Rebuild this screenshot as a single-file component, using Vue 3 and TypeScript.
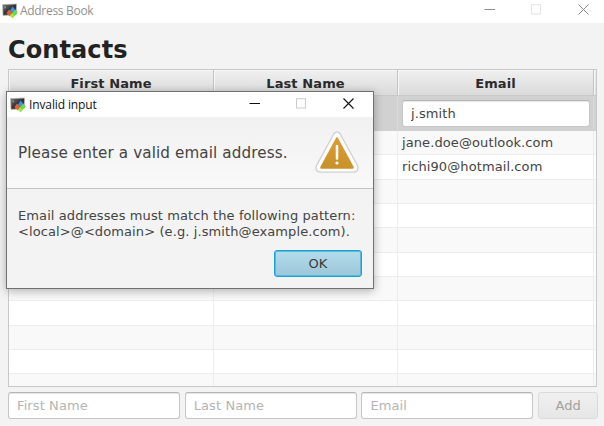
<script setup lang="ts">
import { ref } from 'vue'

interface Contact {
  firstName: string
  lastName: string
  email: string
}

const editedEmail = ref<string>('j.smith')
const contacts = ref<Contact[]>([
  { firstName: '', lastName: '', email: 'jane.doe@outlook.com' },
  { firstName: '', lastName: '', email: 'richi90@hotmail.com' },
])
const emptyRows = 9
const columns: string[] = ['First Name', 'Last Name', 'Email']
const dialogOpen = ref<boolean>(true)
</script>

<template>
  <div class="window">
    <svg class="defs" width="0" height="0" aria-hidden="true">
      <defs>
        <linearGradient id="screen" x1="0" y1="0" x2="1" y2="1">
          <stop offset="0" stop-color="#777" />
          <stop offset="0.5" stop-color="#333" />
          <stop offset="1" stop-color="#222" />
        </linearGradient>
        <linearGradient id="amber" x1="0" y1="0" x2="0" y2="1">
          <stop offset="0" stop-color="#e09a35" />
          <stop offset="1" stop-color="#c8922a" />
        </linearGradient>
        <symbol id="app-icon" viewBox="0 0 16 16">
          <path d="M0.6 1.6 14.6 1 14.2 11.4 1 12.4Z" fill="url(#screen)" stroke="#b8b8b8" stroke-width="0.7" />
          <path d="M2.2 3.5 4 4.4 2.3 5.3" fill="none" stroke="#bbb" stroke-width="0.6" />
          <path d="M10.6 3.4 13.4 6.8 10.4 10 8 7.4Z" fill="#3d8fe8" />
          <path d="M7 6.4 10.4 10 7.8 13.4 4.4 10Z" fill="#ef5b35" />
          <path d="M13.2 6.5 15.6 9.4 10.8 15 8 12.5 10.4 9.6Z" fill="#68df3f" />
          <path d="M10.2 10.4 12.5 12.7 10.6 15.2 7.8 12.8Z" fill="#a5e34a" />
        </symbol>
      </defs>
    </svg>

    <header class="titlebar">
      <svg class="app-icon" width="16" height="16"><use href="#app-icon" /></svg>
      <span class="title">Address Book</span>
      <svg class="controls" width="106" height="12" viewBox="0 0 106 12" fill="none">
        <path d="M0.5 5.5H11" stroke="#8d8d8d" />
        <rect x="47.5" y="0.7" width="9" height="9.3" stroke="#e4e4e4" />
        <path d="M94.5 0.5 104.5 10.5M104.5 0.5 94.5 10.5" stroke="#858585" />
      </svg>
    </header>

    <main class="content">
      <h1>Contacts</h1>
      <section class="table">
        <div class="row head">
          <div v-for="name in columns" :key="name" class="cell">{{ name }}</div>
          <div class="cell"></div>
        </div>
        <div class="row selected">
          <div class="cell"></div>
          <div class="cell"></div>
          <div class="cell"><input v-model="editedEmail" class="field" type="text" /></div>
          <div class="cell"></div>
        </div>
        <div v-for="contact in contacts" :key="contact.email" class="row">
          <div class="cell">{{ contact.firstName }}</div>
          <div class="cell">{{ contact.lastName }}</div>
          <div class="cell">{{ contact.email }}</div>
          <div class="cell"></div>
        </div>
        <div v-for="n in emptyRows" :key="n" class="row">
          <div v-for="c in 4" :key="c" class="cell"></div>
        </div>
      </section>

      <form class="add-form" @submit.prevent>
        <input v-for="name in columns" :key="name" class="field" type="text" :placeholder="name" />
        <button class="add" disabled>Add</button>
      </form>
    </main>

    <section v-if="dialogOpen" class="dialog" role="alertdialog">
      <header class="dialog-title">
        <svg class="app-icon" width="16" height="16"><use href="#app-icon" /></svg>
        <span class="title">Invalid input</span>
        <svg class="controls" width="106" height="12" viewBox="0 0 106 12" fill="none">
          <path d="M0.5 5.5H11" stroke="#111" />
          <rect x="47.5" y="0.7" width="9" height="9.3" stroke="#ccc" />
          <path d="M94.5 0.5 104.5 10.5M104.5 0.5 94.5 10.5" stroke="#111" stroke-width="1.1" />
        </svg>
      </header>
      <div class="dialog-header">
        <span class="message">Please enter a valid email address.</span>
        <svg class="warning" width="46" height="43" viewBox="0 0 46 43">
          <path d="M19.8 3Q23 -1.2 26.2 3L43.5 34.5Q45.6 40.8 39.5 41.2H6.5Q0.4 40.8 2.5 34.5Z" fill="#fff" stroke="#cfcfcf" stroke-width="1.3" />
          <path d="M22 7Q23 5.2 24 7L39.6 35.7Q40.4 37.6 38.6 37.8H7.4Q5.6 37.6 6.4 35.7Z" fill="url(#amber)" />
          <path d="M23 15V27.4" stroke="#fff" stroke-width="2.5" stroke-linecap="round" />
          <circle cx="23" cy="32" r="1.6" fill="#fff" />
        </svg>
      </div>
      <div class="dialog-body">
        <p>Email addresses must match the following pattern:<br />&lt;local&gt;@&lt;domain&gt; (e.g. j.smith@example.com).</p>
        <button class="ok" @click="dialogOpen = false">OK</button>
      </div>
    </section>
  </div>
</template>

<style>
body {
  margin: 0;
  overflow: hidden;
}
</style>

<style scoped>
* {
  box-sizing: border-box;
}
.window {
  position: relative;
  width: 604px;
  height: 426px;
  overflow: hidden;
  background: #f3f3f3;
  font: 13px/16px "DejaVu Sans", sans-serif;
  letter-spacing: 0.1px;
  color: #444;
}
.defs {
  position: absolute;
}
.titlebar,
.dialog-title {
  display: flex;
  align-items: center;
  background: #fff;
  font: 12px/16px "Open Sans", "Noto Sans", sans-serif;
}
.titlebar {
  height: 23px;
  padding: 0 14px 2px 2px;
  color: #909090;
  letter-spacing: -0.3px;
}
.titlebar .controls {
  margin-top: -1px;
}
.title {
  flex: 1;
  margin-left: 2px;
  white-space: nowrap;
}
.content {
  padding: 13px 7px 0 8px;
}
h1 {
  margin: 0 0 5px;
  font-size: 24px;
  line-height: 28px;
  font-weight: bold;
  color: #222;
}
.table {
  width: 589px;
  height: 318px;
  border: 1px solid #c8c8c8;
  background: #fff;
  overflow: hidden;
}
.row {
  display: grid;
  grid-template-columns: 205px 184px 196px 1fr;
  height: 24.33px;
  border-bottom: 1px solid #ededed;
  background: #fff;
}
.row:nth-child(odd) {
  background: #f9f9f9;
}
.cell {
  display: flex;
  align-items: center;
  padding-left: 4px;
  border-right: 1px solid #ededed;
  white-space: nowrap;
}
.cell:last-child {
  border-right: 0;
  padding: 0;
}
.row.head {
  height: 26px;
  background: linear-gradient(#f0f0f0, #dadada);
  border-bottom-color: #c8c8c8;
  font-weight: bold;
  color: #2b2b2b;
}
.head .cell {
  justify-content: center;
  padding: 3px 0 0;
  border-color: #c4c4c4;
  box-shadow: inset 1px 1px #f6f6f6;
}
.row.selected {
  height: 35px;
  background: #d1d1d1;
  border-bottom-color: #d1d1d1;
}
.selected .cell {
  border-color: #dadada;
}
.field {
  min-width: 0;
  height: 27px;
  padding: 1px 8px 0;
  border: 1px solid #c6c6c6;
  border-top-color: #b5b5b5;
  border-radius: 3px;
  background: #fff;
  box-shadow: inset 0 1px 1px #e6e6e6;
  font: inherit;
  letter-spacing: inherit;
  color: #444;
  outline: 0;
}
.field::placeholder {
  color: #b4b4b4;
  opacity: 1;
}
.selected .field {
  width: 188px;
}
.add-form {
  display: grid;
  grid-template-columns: 172px 172px 172px 60px;
  gap: 4.7px;
  margin-top: 5px;
}
.add-form .field {
  padding-top: 0;
}
button {
  padding: 0;
  border-radius: 3px;
  font: inherit;
}
.add {
  height: 27px;
  border: 1px solid #dadada;
  background: linear-gradient(#f0f0f0, #e6e6e6);
  color: #a0a0a0;
}
.dialog {
  position: absolute;
  left: 6px;
  top: 91px;
  width: 368px;
  height: 198px;
  border: 1px solid #707070;
  background: #f3f3f3;
  box-shadow: 0 2px 9px rgba(0, 0, 0, 0.3);
}
.dialog-title {
  height: 25px;
  padding: 0 18px 0 3px;
  color: #111;
  letter-spacing: -0.12px;
}
.dialog-title .title {
  margin-left: 3px;
}
.dialog-title .controls {
  margin-top: -1px;
}
.dialog-header {
  display: flex;
  align-items: center;
  justify-content: space-between;
  height: 72px;
  padding: 0 13px 0 11px;
  border-bottom: 1px solid #c4c4c4;
  background: linear-gradient(#f1f1f1, #f9f9f9);
}
.message {
  padding-top: 1px;
  font-size: 15.17px;
  letter-spacing: 0.12px;
  white-space: nowrap;
}
.dialog-body {
  display: flex;
  flex-direction: column;
  padding: 19px 11px 0;
}
p {
  margin: 0;
  white-space: nowrap;
}
.ok {
  align-self: flex-end;
  width: 88px;
  height: 27px;
  margin-top: 10px;
  border: 1px solid #1ba1d5;
  background: linear-gradient(#b4dcea, #9cc6d9);
  box-shadow: inset 0 0 0 1px #58b9dc;
  color: #3a3a3a;
}
</style>
